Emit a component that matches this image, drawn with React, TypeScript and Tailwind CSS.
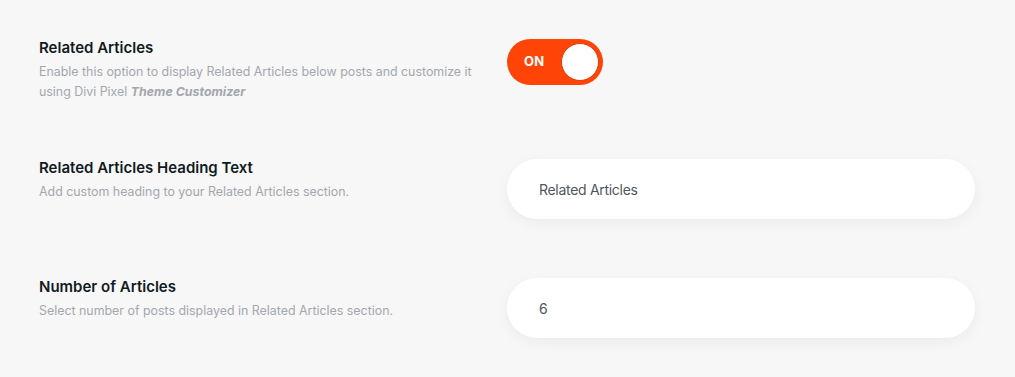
import { useState } from "react";

function Toggle() {
  const [on, setOn] = useState(true);
  return (
    <button
      type="button"
      onClick={() => {
        setOn(!on);
      }}
      className="flex h-[46px] w-[96px] items-center justify-between rounded-full bg-[#fe4507] pl-[17px] pr-[4px]"
    >
      <span className="text-[13px] font-bold tracking-[0.2px] text-white">ON</span>
      <span className="h-[38px] w-[38px] rounded-full border-[1.5px] border-[#e83d05] bg-white" />
    </button>
  );
}

function Row({
  title,
  children,
  control,
  height,
}: {
  title: string;
  children: React.ReactNode;
  control: React.ReactNode;
  height: string;
}) {
  return (
    <div className={`flex ${height}`}>
      <div className="w-[468px]">
        <h3 className="text-[15px] leading-[20px] font-semibold text-[#111b22]">{title}</h3>
        <p className="mt-[4px] text-[12.4px] leading-[20px] text-[#a3a7ae]">{children}</p>
      </div>
      <div className="w-[468px] pt-[1px]">{control}</div>
    </div>
  );
}

const inputCls =
  "h-[60px] w-full rounded-full bg-white px-[32px] text-[14px] tracking-[-0.3px] text-[#50565e] shadow-[0_4px_14px_rgba(0,0,0,0.05)] outline-none";

export default function App() {
  const [heading, setHeading] = useState("Related Articles");
  const [count, setCount] = useState("6");

  return (
    <main
      className="min-h-[377px] bg-[#f7f7f7] pl-[39px] pt-[38px]"
      style={{ fontFamily: "Inter, 'Noto Sans', sans-serif" }}
    >
      <Row title="Related Articles" height="h-[120px]" control={<Toggle />}>
        Enable this option to display Related Articles below posts and customize it
        <br />
        using Divi Pixel <b className="font-bold italic">Theme Customizer</b>
      </Row>
      <Row
        title="Related Articles Heading Text"
        height="h-[119px]"
        control={
          <input
            value={heading}
            onChange={(e) => {
              setHeading(e.target.value);
            }}
            className={inputCls}
          />
        }
      >
        Add custom heading to your Related Articles section.
      </Row>
      <Row
        title="Number of Articles"
        height="h-[100px]"
        control={
          <input
            value={count}
            onChange={(e) => {
              setCount(e.target.value);
            }}
            className={inputCls}
          />
        }
      >
        Select number of posts displayed in Related Articles section.
      </Row>
    </main>
  );
}
